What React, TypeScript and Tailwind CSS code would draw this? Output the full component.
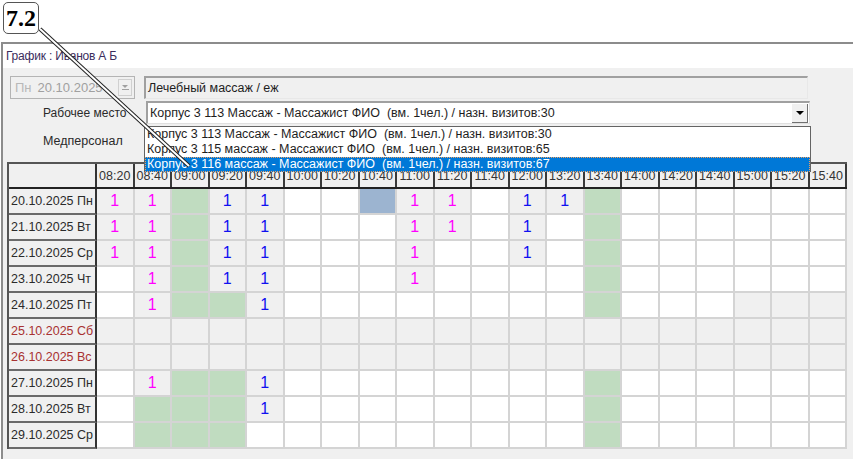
import React from 'react';

const TIMES = [
  '08:20', '08:40', '09:00', '09:20', '09:40', '10:00', '10:20', '10:40', '11:00', '11:20',
  '11:40', '12:00', '13:20', '13:40', '14:00', '14:20', '14:40', '15:00', '15:20', '15:40',
];

// m = magenta 1, u = blue 1, g = gray, G = green, b = blue-gray, w = white
const ROWS = [
  { date: '20.10.2025 Пн', cells: 'mmGuuwwbmmwuuGwwwwww' },
  { date: '21.10.2025 Вт', cells: 'mmGuuwwwmmwuwGwwwwww' },
  { date: '22.10.2025 Ср', cells: 'mmGuuwwwmwwuwGwwwwww' },
  { date: '23.10.2025 Чт', cells: 'wmGuuwwwmwwwwGwwwwww' },
  { date: '24.10.2025 Пт', cells: 'wmGGuwwwwwwwwGwwwggg' },
  { date: '25.10.2025 Сб', cells: 'gggggggggggggggggggg', weekend: true },
  { date: '26.10.2025 Вс', cells: 'gggggggggggggggggggg', weekend: true },
  { date: '27.10.2025 Пн', cells: 'wmGGuwwwwwwwwGwwwwww' },
  { date: '28.10.2025 Вт', cells: 'wGGGuwwwwwwwwGwwwwww' },
  { date: '29.10.2025 Ср', cells: 'wGGGwwwwwwwwwGwwwwww' },
];

const PLACES = [
  'Корпус 3 113 Массаж - Массажист ФИО  (вм. 1чел.) / назн. визитов:30',
  'Корпус 3 115 массаж - Массажист ФИО  (вм. 1чел.) / назн. визитов:65',
  'Корпус 3 116 массаж - Массажист ФИО  (вм. 1чел.) / назн. визитов:67',
];

const cellBg: Record<string, string> = {
  m: 'bg-[#f0f0f0]',
  u: 'bg-[#f0f0f0]',
  g: 'bg-[#f0f0f0]',
  G: 'bg-[#c0dcc0]',
  b: 'bg-[#9cb4d0]',
  w: 'bg-white',
};

const Cell = ({ code }: { code: string }) => (
  <div
    className={`w-[37.5px] h-[26px] shrink-0 border-r-2 border-b-2 border-[#d4d4d4] flex items-center justify-center text-[16px] ${cellBg[code]}`}
  >
    {code === 'm' && <span className="text-[#ff00ff]">1</span>}
    {code === 'u' && <span className="text-[#1010f0]">1</span>}
  </div>
);

export default function App() {
  return (
    <div className="relative w-[853px] h-[459px] overflow-hidden bg-white font-['Liberation_Sans',Arial,sans-serif] text-[#222]">
      {/* callout */}
      <div className="h-[42px] pl-[3px] pt-[2px]">
        <div className="w-[36px] h-[32px] rounded-[5px] border-[1.5px] border-[#555] bg-white flex items-center justify-center font-['Liberation_Serif',serif] font-bold text-[24px] leading-none text-black">
          7.2
        </div>
      </div>

      {/* window */}
      <div className="ml-[1px] h-[417px] border-t-2 border-l-2 border-[#8c8c8c] flex flex-col">
        <div className="h-[24px] bg-white pl-[3px] pt-[6px] text-[12px] leading-none text-[#3b2d5c] tracking-[-0.2px]">
          График : Иванов А Б
        </div>

        <div className="relative flex-1 bg-[#f0f0f0]">
          {/* row 1 */}
          <div className="flex items-start pt-[8px] pl-[7px]">
            <div className="w-[125px] h-[23px] border border-[#b4b4b4] bg-[#f0f0f0] flex items-center pl-[4px] text-[13px]">
              <span className="text-[#b8b8b8]">Пн</span>
              <span className="ml-[6px] text-[#a0a0a0]">20.10.2025</span>
              <div className="ml-auto mr-[2px] w-[14px] h-[17px] border border-[#d0d0d0] flex flex-col items-center justify-center gap-[1px]">
                <div className="w-0 h-0 border-l-[3.5px] border-r-[3.5px] border-t-[3.5px] border-l-transparent border-r-transparent border-t-[#a0a0a0]" />
                <div className="w-[7px] h-[1px] bg-[#a0a0a0]" />
              </div>
            </div>
            <div className="ml-[9px] w-[664px] h-[23px] border-t-2 border-l-2 border-[#a0a0a0] border-b border-r border-b-[#e8e8e8] border-r-[#e8e8e8] bg-[#f0f0f0] flex items-center pl-[2px] text-[12.5px] text-[#1e1e1e]">
              Лечебный массаж / еж
            </div>
          </div>

          {/* row 2 */}
          <div className="flex items-center mt-[2px]">
            <div className="w-[143px] pl-[40px] text-[12px] text-[#2a2a2a] whitespace-nowrap">Рабочее место</div>
            <div className="w-[664px] h-[23px] border-t-2 border-l-2 border-[#a0a0a0] border-b border-r border-b-[#e0e0e0] border-r-[#e0e0e0] bg-white flex items-center pl-[2px] text-[12.5px] text-[#1e1e1e] whitespace-pre">
              {PLACES[0]}
              <div className="ml-auto mr-[1px] w-[16px] h-[19px] bg-[#f0f0f0] border-r border-b border-[#707070] flex items-center justify-center">
                <div className="w-0 h-0 border-l-[4px] border-r-[4px] border-t-[4px] border-l-transparent border-r-transparent border-t-black" />
              </div>
            </div>
          </div>

          {/* row 3 */}
          <div className="h-[38px] flex items-center">
            <div className="pl-[40px] text-[12.5px] text-[#2a2a2a] -mt-[3px]">Медперсонал</div>
          </div>

          {/* dropdown list overlay */}
          <div className="absolute left-[141px] top-[58px] z-10 w-[667px] h-[46px] border border-[#646464] bg-white text-[12.5px] text-[#1e1e1e] whitespace-pre">
            <div className="h-[15px] leading-[15px] pl-[2px]">{PLACES[0]}</div>
            <div className="h-[15px] leading-[15px] pl-[2px]">{PLACES[1]}</div>
            <div className="h-[15px] leading-[15px] pl-[2px] bg-[#0078d7] text-white outline-1 outline-dotted outline-[#f0a060] -outline-offset-1">
              {PLACES[2]}
            </div>
          </div>

          {/* schedule grid */}
          <div className="ml-[4px] w-[840px] border-l-2 border-t-2 border-[#555]">
            <div className="flex h-[25px] bg-[#f0f0f0] border-b-2 border-[#222]">
              <div className="w-[88px] shrink-0 border-r-2 border-[#333]" />
              {TIMES.map((t) => (
                <div
                  key={t}
                  className="w-[37.5px] shrink-0 border-r-2 border-[#3a3a3a] flex items-center justify-center pt-[2px] text-[12.5px] text-[#333]"
                >
                  {t}
                </div>
              ))}
            </div>
            {ROWS.map((r) => (
              <div key={r.date} className="flex">
                <div
                  className={`w-[88px] h-[26px] shrink-0 bg-[#f0f0f0] border-r-2 border-b-2 border-r-[#333] border-b-[#6a6a6a] flex items-center pl-[2px] text-[12.5px] whitespace-nowrap ${
                    r.weekend ? 'text-[#a83232]' : 'text-[#2b2b2b]'
                  }`}
                >
                  {r.date}
                </div>
                {r.cells.split('').map((c, i) => (
                  <Cell key={i} code={c} />
                ))}
              </div>
            ))}
          </div>
        </div>
      </div>

      {/* callout leader line */}
      <svg className="pointer-events-none absolute left-0 top-0 z-20" width="853" height="459">
        <line x1="40" y1="29" x2="189" y2="166" stroke="#222" strokeWidth="4" />
        <line x1="40" y1="29" x2="189" y2="166" stroke="#fff" strokeWidth="2" />
      </svg>
    </div>
  );
}
